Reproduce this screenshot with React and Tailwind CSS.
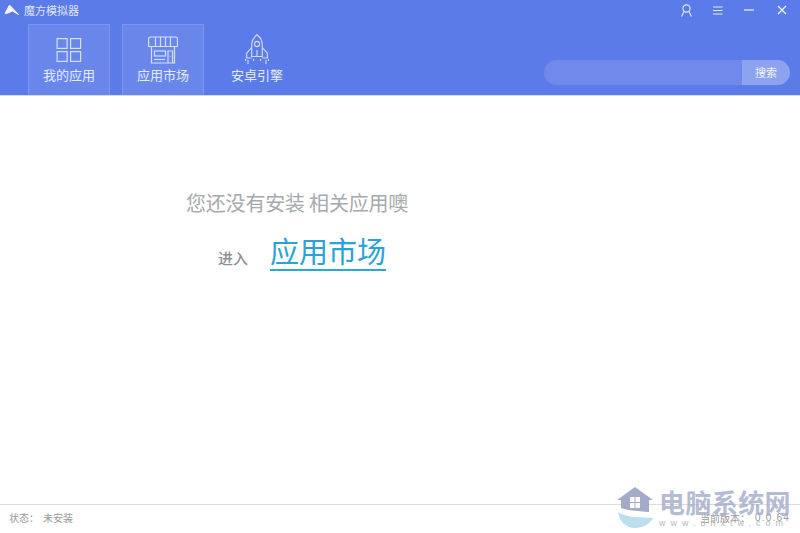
import React from "react";

const cjk = { fontFamily: '"Noto Sans CJK SC", sans-serif' };

const GridIcon = () => (
  <svg width="26" height="24" viewBox="0 0 26 24" fill="none" stroke="#d5defa" strokeWidth="1.2">
    <rect x="1.100" y="0.600" width="10" height="9.800" />
    <rect x="14.600" y="0.600" width="10" height="9.800" />
    <rect x="1.100" y="13.600" width="10" height="9.800" />
    <rect x="14.600" y="13.600" width="10" height="9.800" />
  </svg>
);

const StoreIcon = () => (
  <svg width="30" height="28" viewBox="0 0 30 28" fill="none" stroke="#d5defa" strokeWidth="1.2">
    <path d="M2.500 1h25l2 1v8.500H.6V2z" />
    <path d="M7.500 1v9.500M12.500 1v9.500M17.500 1v9.500M22.500 1v9.500" />
    <path d="M3.500 10.500V27h23V10.500" />
    <rect x="6.500" y="15" width="11" height="5" />
    <path d="M20 27V15h4.500v12" />
    <path d="M21.800 20.500h.8" />
    <path d="M6 23.500h11" />
  </svg>
);

const RocketIcon = () => (
  <svg width="26" height="31" viewBox="0 0 26 31" fill="none" stroke="#d5defa" strokeWidth="1.1">
    <path d="M13 .8c3.600 2.800 5.300 6.300 5.300 10.200v11.500H7.700V11C7.700 7.100 9.400 3.600 13 .8z" />
    <circle cx="13" cy="10" r="2.600" />
    <path d="M13 16v6.500" />
    <path d="M7.700 13.500 2.600 19.300v4.700h5.100" />
    <path d="M18.300 13.500l5.100 5.800v4.700h-5.100" />
    <path d="M4 26v4M22 26v4M1.500 25v2M24.500 25v2M9.500 25v2M16.500 25v2" />
  </svg>
);

const Tab = ({ icon, label, active }) => (
  <div
    className={`w-[82px] h-[71px] flex flex-col items-center border-x border-t ${
      active ? "bg-[#6987ea] border-[#7d97ee]" : "border-transparent"
    }`}
  >
    <div className="h-[31px] mt-[9px] flex items-center justify-center">{icon}</div>
    <span className="text-[13px] leading-[18px] mt-[1px] text-[#e6ebfc]">{label}</span>
  </div>
);

export default function App() {
  return (
    <div className="relative w-[800px] h-[533px] overflow-hidden flex flex-col bg-white" style={cjk}>
      <header className="h-[96px] bg-[#5b7be9] border-b border-[#cfd9f8] flex flex-col shrink-0">
        <div className="h-[24px] flex items-center pl-[4px] pr-[13px] pb-[4px] text-[#dfe6fb]">
          <svg width="16" height="12" viewBox="0 0 16 12" fill="#f4f6fe" stroke="#f4f6fe" strokeWidth="1" strokeLinejoin="round">
            <path d="M1 9.500 5.500 1 14.500 10.500 8.500 7 4 9z" />
          </svg>
          <span className="ml-[4px] text-[11px] leading-none">魔方模拟器</span>
          <div className="ml-auto flex items-center">
            <svg width="13" height="13" viewBox="0 0 13 13" fill="none" stroke="#e6ebfc" strokeWidth="1.100">
              <circle cx="6.500" cy="4.500" r="3.600" />
              <path d="M4 7.500 1.500 12.500M9 7.500l2.500 5" />
            </svg>
            <svg className="ml-[20px]" width="10" height="9" viewBox="0 0 10 9" stroke="#e6ebfc" strokeWidth="1">
              <path d="M0 1h9.500M0 4.500h9.500M0 8h9.500" />
            </svg>
            <svg className="ml-[21px]" width="10" height="10" viewBox="0 0 10 10" stroke="#f4f6fe" strokeWidth="1.200">
              <path d="M0 5h10" />
            </svg>
            <svg className="ml-[23px]" width="10" height="10" viewBox="0 0 10 10" stroke="#f4f6fe" strokeWidth="1.200">
              <path d="M1 1l8 8M9 1l-8 8" />
            </svg>
          </div>
        </div>
        <div className="flex-1 flex pl-[28px] pr-[10px] relative">
          <Tab icon={<GridIcon />} label="我的应用" active />
          <div className="ml-[12px]">
            <Tab icon={<StoreIcon />} label="应用市场" active />
          </div>
          <div className="ml-[12px]">
            <Tab icon={<RocketIcon />} label="安卓引擎" />
          </div>
          <div className="ml-auto mt-[36px] w-[246px] h-[25px] rounded-full overflow-hidden flex bg-[#7089ea]">
            <div className="flex-1" />
            <div className="w-[48px] bg-[#8ea3f0] text-[#f0f3fe] text-[11px] flex items-center justify-center">
              搜索
            </div>
          </div>
        </div>
      </header>

      <main className="flex-1 pl-[186px] pt-[93px]">
        <p className="text-[20px] leading-[28px] text-[#a6a9ad] tracking-[-0.2px]">您还没有安装 相关应用噢</p>
        <div className="flex items-end ml-[32px] mt-[15px]">
          <span className="text-[15px] leading-[22px] mb-[2px] text-[#8c9096] font-medium">进入</span>
          <span className="ml-[22px] text-[29px] leading-[36px] text-[#29a3d6] border-b-2 border-[#29a9d8] pb-[1px]">
            应用市场
          </span>
        </div>
      </main>

      <footer className="h-[29px] border-t border-[#dcdcdc] flex items-center pl-[9px] pr-[10px] pb-[4px] text-[10px] text-[#9a9a9a] shrink-0">
        <span>状态：</span>
        <span className="ml-[4px]">未安装</span>
        <span className="ml-auto">当前版本：</span>
        <span className="ml-[5px] tracking-[1.200px]" style={{ fontFamily: '"Liberation Sans", sans-serif' }}>0.0.64</span>
      </footer>

      {/* 水印 */}
      <div className="absolute left-[617px] top-[487px] flex items-start pointer-events-none">
        <svg width="37" height="41" viewBox="0 0 37 41">
          <path d="M18 0 36 13h-4v12c-9-1-20-1-28-4v-8H0z" fill="#a3abc9" />
          <path d="M13 10h4.500v5H13zM18.500 10H23v5h-4.500zM13 16h4.500v5H13zM18.500 16H23v5h-4.500z" fill="#fff" />
          <path d="M1 25c9 6 21 5 35 6-3 6-10 10-18 10C9 41 2 34 1 25z" fill="#bcdff0" />
        </svg>
        <div className="ml-[5px] opacity-80 -mt-[1px]">
          <div className="text-[26px] leading-[32px] font-bold text-[#a3abc9] tracking-[0.4px] whitespace-nowrap">电脑系统网</div>
          <div className="text-[9px] leading-[10px] text-[#a9a9a9] tracking-[5px] whitespace-nowrap" style={{ fontFamily: '"Liberation Sans", sans-serif' }}>
            www.dnxtw.com
          </div>
        </div>
      </div>
    </div>
  );
}
